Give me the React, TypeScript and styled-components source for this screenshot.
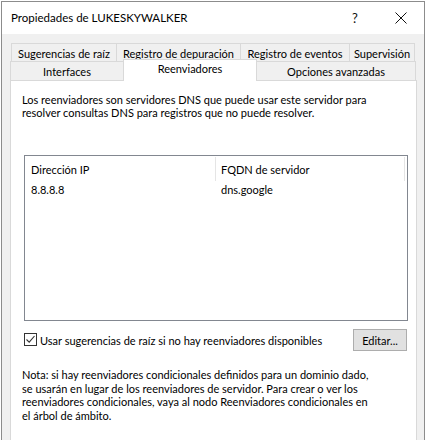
import React from 'react';
import styled, { createGlobalStyle } from 'styled-components';

const GlobalStyle = createGlobalStyle`
  html, body { margin: 0; padding: 0; background: #ffffff; overflow: hidden; height: 440px; }
  body { font-family: Lato, "Liberation Sans", sans-serif; font-size: 11px; color: #000; }
  * { box-sizing: border-box; }
`;

const Window = styled.div`
  margin: 1px 0 0 1px;
  width: 424px;
  height: 439px;
  border: 1px solid #8c8c8c;
  border-bottom: none;
  background: #f0f0f0;
  display: flex;
  flex-direction: column;
  overflow: hidden;
`;

const TitleBar = styled.div`
  height: 32px;
  background: #ffffff;
  display: flex;
  align-items: center;
  flex: none;
`;

const Title = styled.div`
  flex: 1;
  padding-left: 9px;
  font-size: 11.5px;
  padding-bottom: 1px;
`;

const CaptionButton = styled.div`
  width: 46px;
  height: 32px;
  display: flex;
  align-items: center;
  justify-content: center;
  font-size: 13px;
  color: #111;
`;

const Body = styled.div`
  flex: 1;
  min-height: 0;
  display: flex;
  flex-direction: column;
  padding: 9px 0 0 8px;
`;

const TabRow = styled.div<{ $indent: number }>`
  display: flex;
  flex: none;
  height: ${(p) => (p.$indent ? 18 : 19)}px;
  margin-left: ${(p) => p.$indent}px;
  align-items: flex-start;
`;

const Tab = styled.div<{ $w: number; $selected?: boolean }>`
  width: ${(p) => p.$w}px;
  flex: none;
  margin-left: -1px;
  &:first-child { margin-left: 0; }
  height: ${(p) => (p.$selected ? 22 : 19)}px;
  margin-top: ${(p) => (p.$selected ? -2 : 0)}px;
  border: 1px solid #d9d9d9;
  border-bottom: none;
  background: ${(p) => (p.$selected ? '#ffffff' : '#f0f0f0')};
  position: relative;
  z-index: ${(p) => (p.$selected ? 2 : 1)};
  display: flex;
  align-items: center;
  justify-content: center;
  padding-bottom: ${(p) => (p.$selected ? 4 : 0)}px;
  white-space: nowrap;
`;

const Panel = styled.div`
  width: 407px;
  flex: 1;
  min-height: 0;
  background: #ffffff;
  border: 1px solid #d9d9d9;
  border-bottom: none;
  padding: 12px 0 0 11px;
  display: flex;
  flex-direction: column;
`;

const Paragraph = styled.div<{ $lh: number }>`
  line-height: ${(p) => p.$lh}px;
`;

const ListBox = styled.div`
  margin: 36px 0 0 2px;
  width: 384px;
  height: 166px;
  border: 1px solid #828790;
  background: #ffffff;
  flex: none;
`;

const Grid = styled.div`
  display: grid;
  grid-template-columns: 191px 189px;
`;

const HeaderCell = styled.div<{ $pad: number }>`
  height: 24px;
  display: flex;
  align-items: center;
  padding-left: ${(p) => p.$pad}px;
  border-right: 1px solid #e5e5e5;
  margin-top: 1px;
`;

const Cell = styled.div<{ $pad: number }>`
  height: 17px;
  display: flex;
  align-items: center;
  padding-left: ${(p) => p.$pad}px;
`;

const OptionRow = styled.div`
  margin: 8px 0 0 2px;
  width: 384px;
  height: 22px;
  display: flex;
  align-items: center;
  flex: none;
`;

const CheckLabel = styled.label`
  display: flex;
  align-items: center;
  flex: 1;
  gap: 3px;
  padding-top: 1px;
`;

const CheckBox = styled.span`
  width: 13px;
  height: 13px;
  border: 1px solid #333333;
  background: #ffffff;
  display: flex;
  align-items: center;
  justify-content: center;
  margin-top: -3px;
`;

const Button = styled.div`
  width: 54px;
  height: 22px;
  margin-right: 1px;
  background: #e1e1e1;
  border: 1px solid #adadad;
  display: flex;
  align-items: center;
  justify-content: center;
`;

const Note = styled(Paragraph)`
  margin-top: 17px;
`;

const rowOne = [
  { label: 'Sugerencias de raíz', w: 106 },
  { label: 'Registro de depuración', w: 125 },
  { label: 'Registro de eventos', w: 110 },
  { label: 'Supervisión', w: 66 },
];

const rowTwo = [
  { label: 'Interfaces', w: 114 },
  { label: 'Reenviadores', w: 134, selected: true },
  { label: 'Opciones avanzadas', w: 160 },
];

export default function App() {
  return (
    <>
      <GlobalStyle />
      <Window>
        <TitleBar>
          <Title>Propiedades de LUKESKYWALKER</Title>
          <CaptionButton>?</CaptionButton>
          <CaptionButton>
            <svg width="12" height="12" viewBox="0 0 12 12">
              <path d="M0.5 0.5 L11.5 11.5 M11.5 0.5 L0.5 11.5" stroke="#111" strokeWidth="1" fill="none" />
            </svg>
          </CaptionButton>
        </TitleBar>
        <Body>
          <TabRow $indent={1}>
            {rowOne.map((t) => (
              <Tab key={t.label} $w={t.w}>{t.label}</Tab>
            ))}
          </TabRow>
          <TabRow $indent={0}>
            {rowTwo.map((t) => (
              <Tab key={t.label} $w={t.w} $selected={t.selected}>{t.label}</Tab>
            ))}
          </TabRow>
          <Panel>
            <Paragraph $lh={13}>
              Los reenviadores son servidores DNS que puede usar este servidor para
              <br />
              resolver consultas DNS para registros que no puede resolver.
            </Paragraph>
            <ListBox>
              <Grid>
                <HeaderCell $pad={6}>Dirección IP</HeaderCell>
                <HeaderCell $pad={5}>FQDN de servidor</HeaderCell>
                <Cell $pad={6}>8.8.8.8</Cell>
                <Cell $pad={5}>dns.google</Cell>
              </Grid>
            </ListBox>
            <OptionRow>
              <CheckLabel>
                <CheckBox>
                  <svg width="11" height="11" viewBox="0 0 11 11">
                    <path d="M1.5 5.5 L4.2 8.2 L9.5 2" stroke="#333" strokeWidth="1.1" fill="none" />
                  </svg>
                </CheckBox>
                Usar sugerencias de raíz si no hay reenviadores disponibles
              </CheckLabel>
              <Button>Editar...</Button>
            </OptionRow>
            <Note $lh={13.6}>
              Nota: si hay reenviadores condicionales definidos para un dominio dado,
              <br />
              se usarán en lugar de los reenviadores de servidor. Para crear o ver los
              <br />
              reenviadores condicionales, vaya al nodo Reenviadores condicionales en
              <br />
              el árbol de ámbito.
            </Note>
          </Panel>
        </Body>
      </Window>
    </>
  );
}
